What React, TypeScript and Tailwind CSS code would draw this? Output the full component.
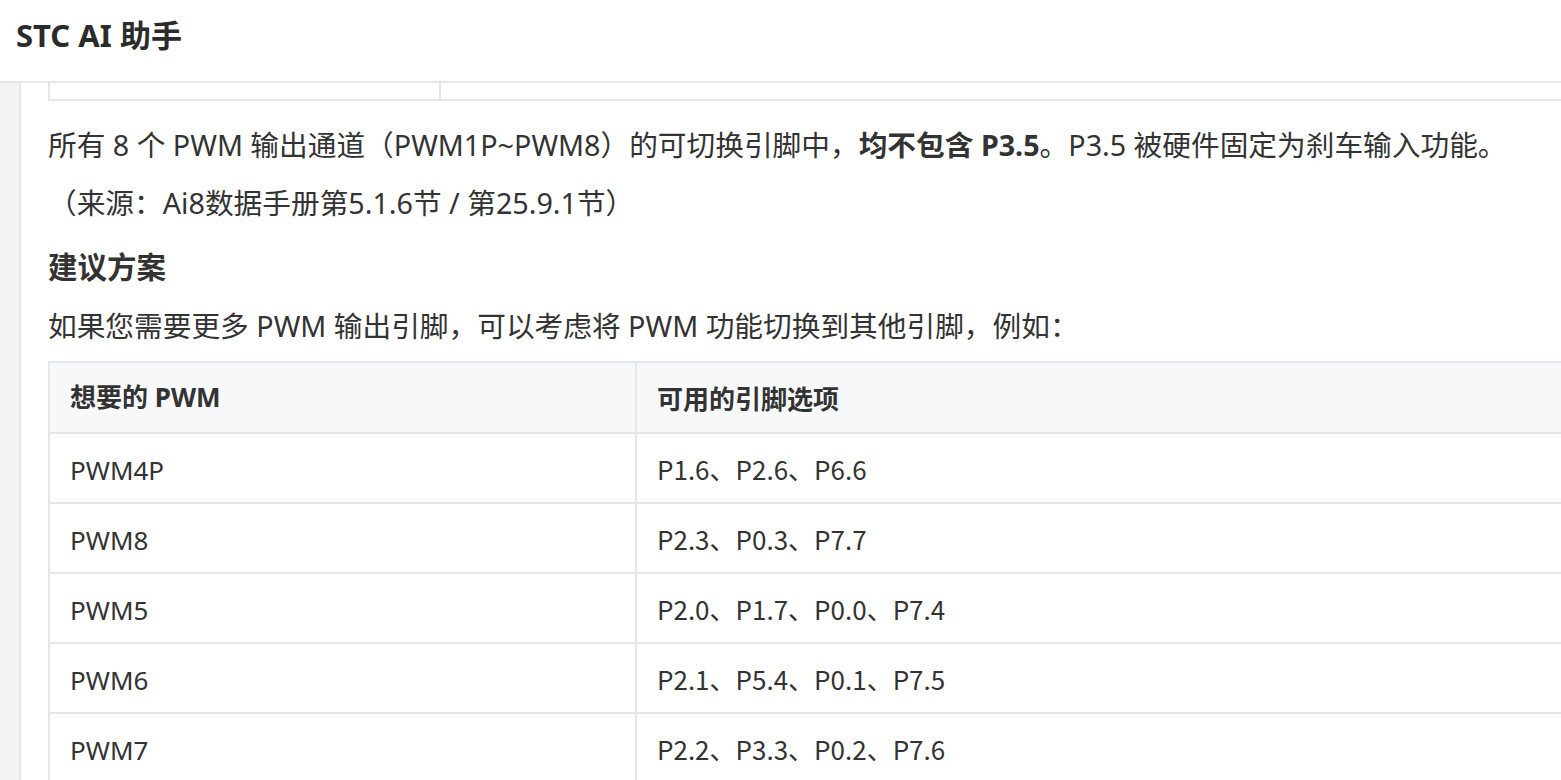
import React from "react";

const rows: [string, string][] = [
  ["PWM4P", "P1.6、P2.6、P6.6"],
  ["PWM8", "P2.3、P0.3、P7.7"],
  ["PWM5", "P2.0、P1.7、P0.0、P7.4"],
  ["PWM6", "P2.1、P5.4、P0.1、P7.5"],
  ["PWM7", "P2.2、P3.3、P0.2、P7.6"],
];

export default function App() {
  return (
    <div className="h-[780px] w-[1561px] overflow-hidden bg-white text-[#333] flex flex-col font-['Noto_Sans_CJK_SC',sans-serif]">
      {/* Header */}
      <header className="h-[83px] shrink-0 border-b-2 border-[#e6e6e6] flex items-center px-4">
        <h1 className="text-[31px] font-bold text-[#2b2b2b] -mt-[10px] font-['Noto_Sans','Noto_Sans_CJK_SC',sans-serif]">
          STC AI 助手
        </h1>
      </header>

      <div className="flex flex-1 min-h-0">
        {/* Left gutter */}
        <div className="w-[21px] shrink-0 bg-[#f3f3f3] border-r-2 border-[#e6e6e6]" />

        {/* Message content (scrolled) */}
        <main className="flex-1 min-w-0 overflow-hidden pl-[27px]">
          {/* tail of a previous table */}
          <div className="flex w-[1700px] h-[18px] border-l-2 border-b-2 border-[#e6e6e6]">
            <div className="w-[391px] border-r-2 border-[#e6e6e6]" />
            <div className="flex-1" />
          </div>

          <div className="text-[28.7px] leading-[43px] font-['Noto_Sans','Noto_Sans_CJK_SC',sans-serif]">
            <p className="mt-[22px] whitespace-nowrap">
              所有 8 个 PWM 输出通道（PWM1P~PWM8）的可切换引脚中，
              <strong className="font-bold">均不包含 P3.5</strong>。P3.5 被硬件固定为刹车输入功能。
            </p>
            <p className="mt-[15px] whitespace-nowrap">（来源：Ai8数据手册第5.1.6节 / 第25.9.1节）</p>

            <h3 className="mt-[21px] text-[29.5px] font-bold">建议方案</h3>
            <p className="mt-[16px] whitespace-nowrap">
              如果您需要更多 PWM 输出引脚，可以考虑将 PWM 功能切换到其他引脚，例如：
            </p>
          </div>

          <table className="mt-[14px] w-[1700px] border-collapse text-[26px] leading-[43px]">
            <thead>
              <tr className="bg-[#f6f8fa] h-[71px]">
                <th className="w-[587px] border-2 border-[#e6e6e6] px-5 text-left font-bold font-['Noto_Sans','Noto_Sans_CJK_SC',sans-serif]">
                  想要的 PWM
                </th>
                <th className="border-2 border-[#e6e6e6] px-5 text-left font-bold">可用的引脚选项</th>
              </tr>
            </thead>
            <tbody>
              {rows.map(([pwm, pins]) => (
                <tr key={pwm} className="h-[70px]">
                  <td className="border-2 border-[#e6e6e6] px-5 pt-[5px] font-['Noto_Sans','Noto_Sans_CJK_SC',sans-serif]">
                    {pwm}
                  </td>
                  <td className="border-2 border-[#e6e6e6] px-5">{pins}</td>
                </tr>
              ))}
            </tbody>
          </table>
        </main>
      </div>
    </div>
  );
}
